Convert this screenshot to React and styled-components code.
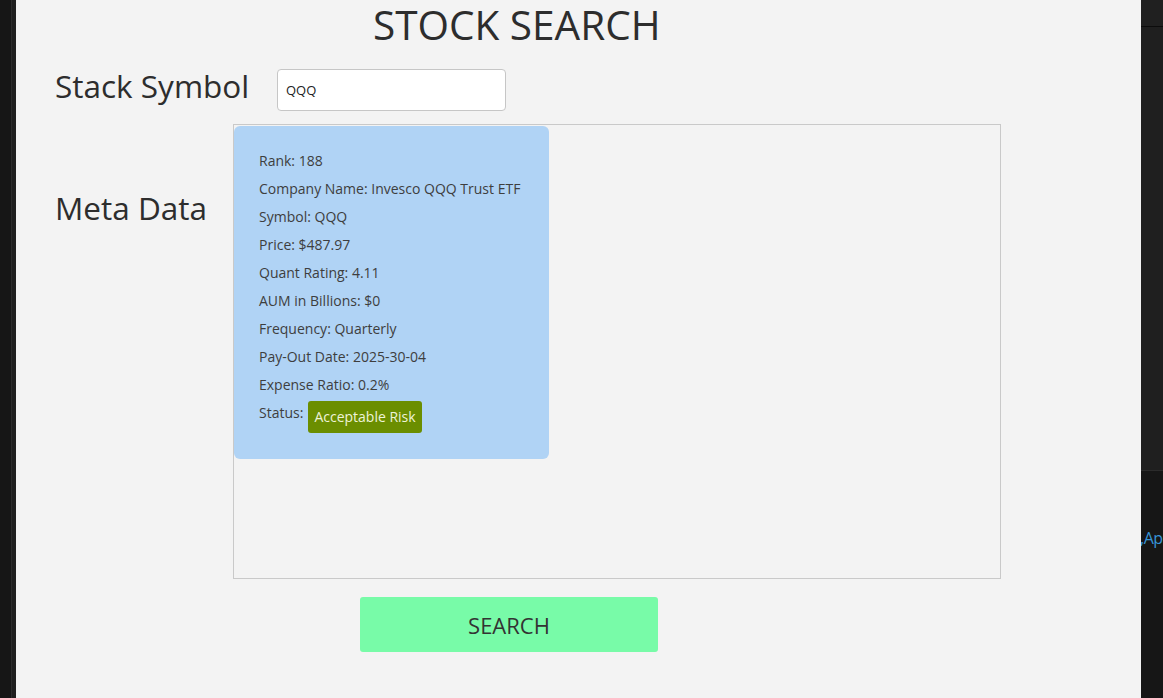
import styled, { createGlobalStyle } from "styled-components";

const GlobalStyle = createGlobalStyle`
    html, body{
        margin: 0;
        padding: 0;
        background: #1b1b1b;
    }
    body{
        font-family: "Open Sans", "Noto Sans", sans-serif;
    }
`;

const Screen = styled.div`
    width: 1163px;
    height: 698px;
    display: flex;
    overflow: hidden;
`;

const LeftEdge = styled.div`
    width: 16px;
    flex-shrink: 0;
    display: flex;
    background: #161616;
    .rail{
        margin-left: 11px;
        width: 5px;
        background: #1f1f1f;
        border-left: 1px solid #2c2c2c;
        box-sizing: border-box;
    }
`;

const RightEdge = styled.div`
    width: 22px;
    flex-shrink: 0;
    display: flex;
    flex-direction: column;
    overflow: hidden;
    .top{
        height: 26px;
        background: #202020;
        border-bottom: 1px solid #0c0c0c;
    }
    .mid{
        height: 443px;
        background: #1f1f1f;
        border-bottom: 1px solid #2b2b2b;
    }
    .bottom{
        flex: 1;
        background: #161616;
        padding-top: 56px;
        color: #3794d6;
        font-size: 16px;
        font-family: "Open Sans", sans-serif;
        white-space: nowrap;
        letter-spacing: -0.5px;
        text-indent: -1px;
    }
`;

const Panel = styled.div`
    width: 1125px;
    flex-shrink: 0;
    background: #f3f3f3;
    padding-left: 39px;
    box-sizing: border-box;
    display: flex;
    flex-direction: column;
    color: #333;
`;

const Title = styled.h1`
    margin: 0 0 0 318px;
    padding-top: 3px;
    font-weight: 400;
    font-size: 40.5px;
    line-height: 44px;
    height: 47px;
    box-sizing: border-box;
    color: #2d2d2d;
`;

const Row = styled.div`
    display: flex;
    align-items: ${p => p.$align || "center"};
    margin-top: ${p => p.$top || 0}px;
`;

const Label = styled.label`
    width: ${p => p.$width}px;
    flex-shrink: 0;
    font-size: 31.5px;
    line-height: 40px;
    color: #2d2d2d;
    padding-top: ${p => p.$pad || 0}px;
    margin-top: ${p => p.$shift || 0}px;
`;

const Input = styled.input`
    width: 229px;
    height: 42px;
    box-sizing: border-box;
    border: 1px solid #c6c6c6;
    border-radius: 4px;
    background: #fff;
    padding: 0 8px;
    font-family: "Open Sans", sans-serif;
    font-size: 13px;
    color: #222;
    outline: none;
`;

const MetaBox = styled.div`
    width: 768px;
    height: 455px;
    box-sizing: border-box;
    border: 1px solid #c9c9c9;
    padding: 1px 0 0 0;
`;

const Card = styled.div`
    width: 315px;
    height: 333px;
    box-sizing: border-box;
    background: #b0d3f5;
    border-radius: 6px;
    padding: 21px 0 0 25px;
    display: flex;
    flex-direction: column;
    font-size: 14px;
    color: #3e3e3e;
    .line{
        height: 28px;
        line-height: 28px;
        white-space: nowrap;
    }
    .status{
        display: flex;
        align-items: flex-start;
        gap: 5px;
    }
`;

const Badge = styled.span`
    display: inline-block;
    margin-top: 2px;
    height: 32px;
    line-height: 32px;
    padding: 0 6px;
    border-radius: 3px;
    background: #6b8e00;
    color: #eef3d8;
    font-size: 14px;
`;

const SearchButton = styled.button`
    margin-left: 305px;
    width: 298px;
    height: 55px;
    border: none;
    border-radius: 3px;
    background: #78fba8;
    font-family: "Open Sans", sans-serif;
    font-size: 22px;
    color: #333;
    cursor: pointer;
`;

const meta = [
    "Rank: 188",
    "Company Name: Invesco QQQ Trust ETF",
    "Symbol: QQQ",
    "Price: $487.97",
    "Quant Rating: 4.11",
    "AUM in Billions: $0",
    "Frequency: Quarterly",
    "Pay-Out Date: 2025-30-04",
    "Expense Ratio: 0.2%",
];

export default function App(){
    return (
        <>
            <GlobalStyle/>
            <Screen>
                <LeftEdge><div className="rail"/></LeftEdge>
                <Panel>
                    <Title>STOCK SEARCH</Title>
                    <Row $top={22}>
                        <Label $width={222} $shift={-8}>Stack Symbol</Label>
                        <Input defaultValue="QQQ"/>
                    </Row>
                    <Row $top={13} $align="flex-start">
                        <Label $width={178} $pad={64}>Meta Data</Label>
                        <MetaBox>
                            <Card>
                                {meta.map((m, i) => (
                                    <div className="line" key={i}>{m}</div>
                                ))}
                                <div className="line status">
                                    <span>Status:</span>
                                    <Badge>Acceptable Risk</Badge>
                                </div>
                            </Card>
                        </MetaBox>
                    </Row>
                    <Row $top={18}>
                        <SearchButton>SEARCH</SearchButton>
                    </Row>
                </Panel>
                <RightEdge>
                    <div className="top"/>
                    <div className="mid"/>
                    <div className="bottom">,Ap</div>
                </RightEdge>
            </Screen>
        </>
    );
}
